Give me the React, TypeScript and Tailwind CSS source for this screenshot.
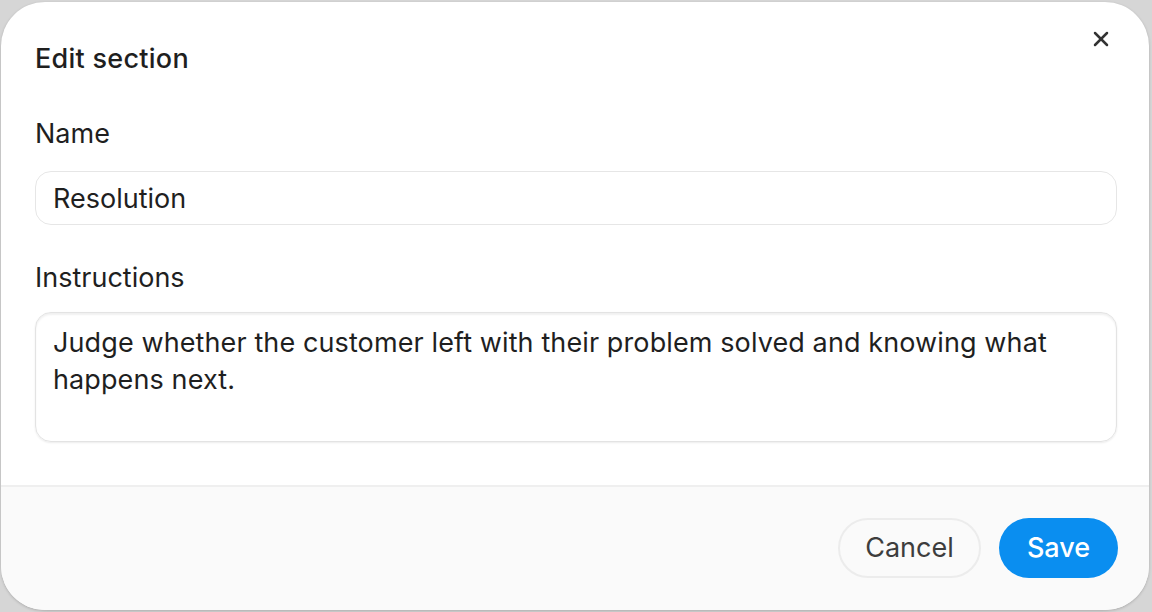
import { X } from 'lucide-react';

export default function App() {
  return (
    <div
      className="w-[1152px] h-[612px] bg-[#d6d6d6] overflow-hidden"
      style={{ fontFamily: 'Inter, "Noto Sans", sans-serif' }}
    >
      <div className="relative ml-px mt-[2px] w-[1148px] h-[608px] rounded-[44px] bg-white shadow-[0_1px_3px_rgba(0,0,0,0.2)] overflow-hidden flex flex-col">
        <button className="absolute right-[33px] top-[22px] w-[30px] h-[30px] flex items-center justify-center text-[#333]">
          <X size={24} strokeWidth={2.5} />
        </button>
        <div className="pl-[34px] pr-[32px]">
          <h2 className="mt-[39px] text-[27px] leading-[36px] font-medium tracking-[0.01em] text-[#1f1f1f]">
            Edit section
          </h2>
          <label className="block mt-[39px] text-[27px] leading-[36px] text-[#1f1f1f]">
            Name
          </label>
          <input
            className="mt-[19px] w-full h-[54px] rounded-[16px] border border-[#e6e6e6] px-[17px] text-[27px] text-[#1f1f1f] outline-none"
            defaultValue="Resolution"
          />
          <label className="block mt-[35px] text-[27px] leading-[36px] text-[#1f1f1f]">
            Instructions
          </label>
          <textarea
            className="block mt-[16px] w-full h-[130px] rounded-[16px] border border-[#e3e3e3] shadow-[inset_0_2px_2px_rgba(0,0,0,0.06),0_1px_2px_rgba(0,0,0,0.08)] px-[17px] pt-[11px] text-[27px] leading-[37px] tracking-[0.004em] text-[#1f1f1f] resize-none outline-none"
            defaultValue="Judge whether the customer left with their problem solved and knowing what happens next."
          />
        </div>
        <div className="mt-[43px] flex-1 border-t-2 border-[#efefef] bg-[#fafafa] flex justify-end items-start gap-[18px] pt-[31px] pr-[31px]">
          <button className="h-[60px] w-[143px] rounded-full border-2 border-[#ececec] text-[27px] text-[#3d3d3d]">
            Cancel
          </button>
          <button className="h-[60px] w-[119px] rounded-full bg-[#0a8ef0] text-[27px] font-medium text-white">
            Save
          </button>
        </div>
      </div>
    </div>
  );
}
